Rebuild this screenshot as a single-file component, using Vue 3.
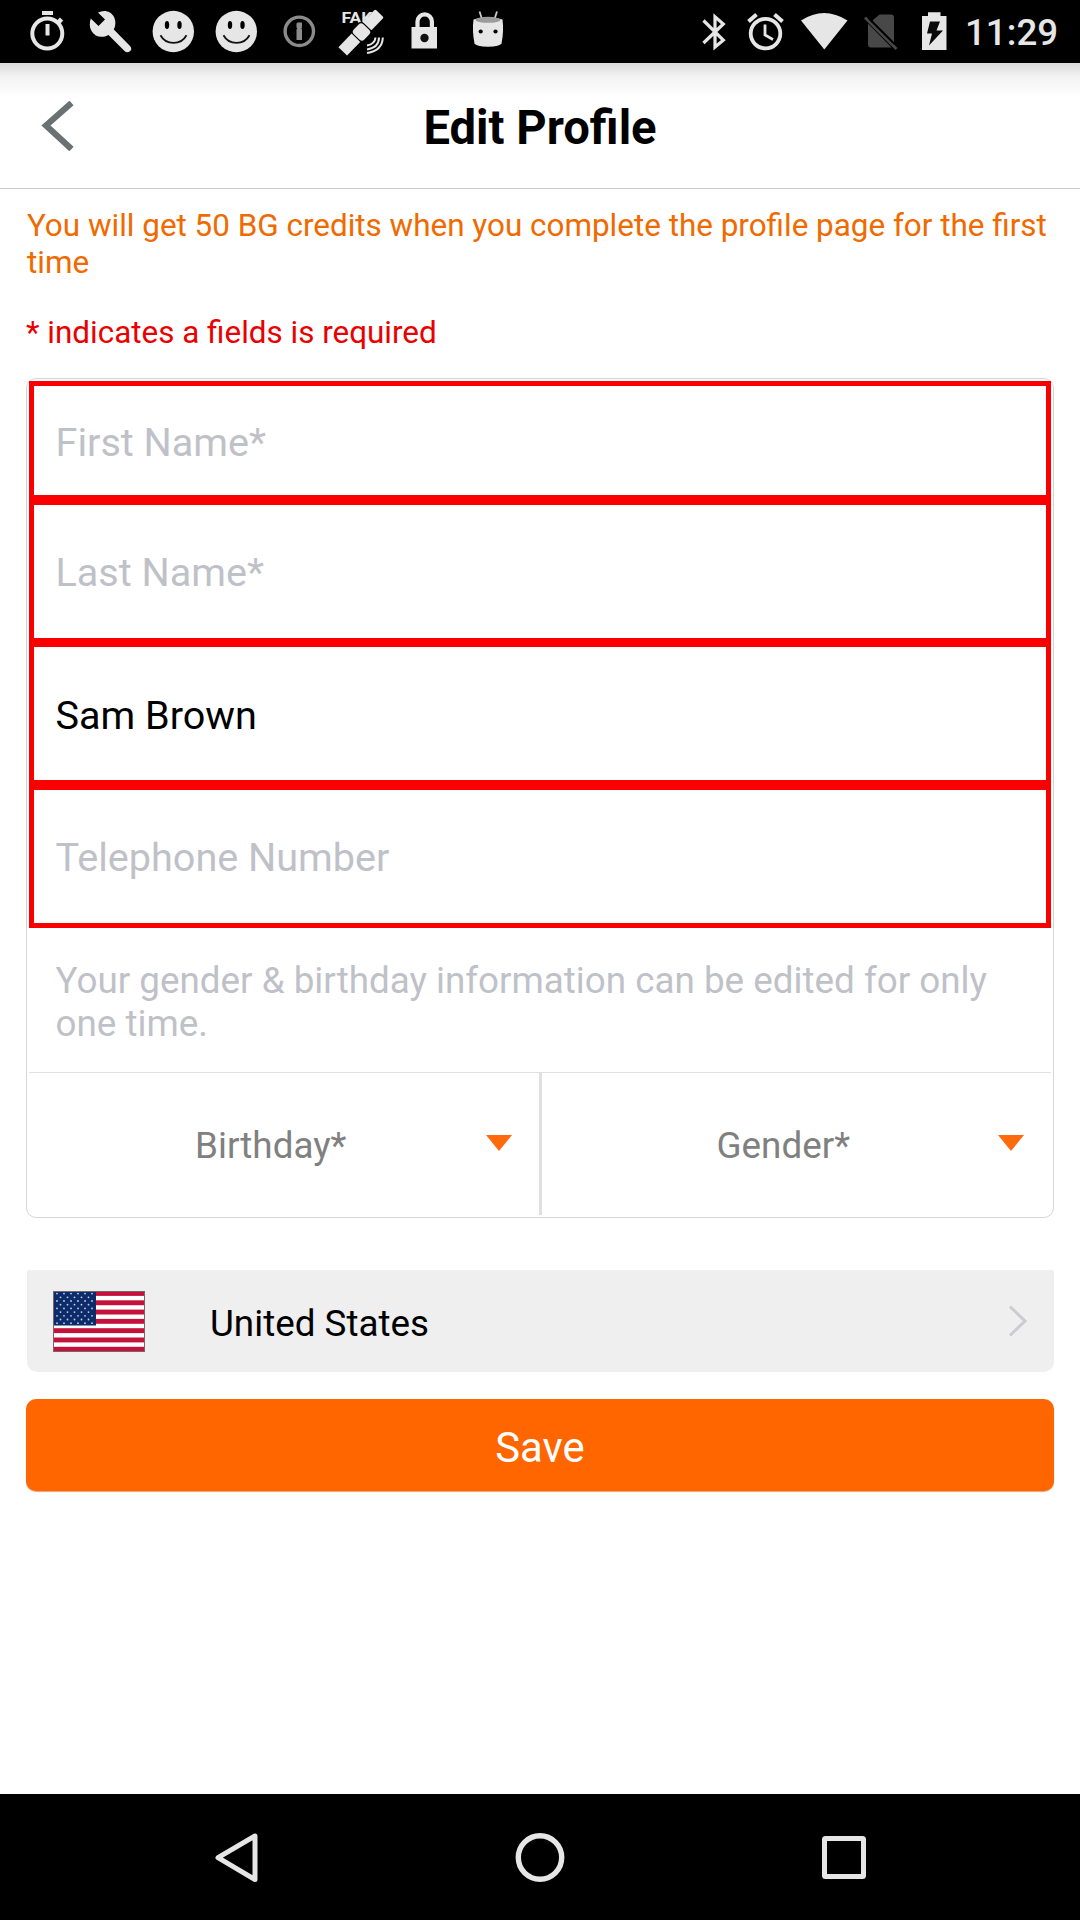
<script setup>
const fields = [
  { text: 'First Name*', size: 'short' },
  { text: 'Last Name*' },
  { text: 'Sam Brown', filled: true, size: 'joined' },
  { text: 'Telephone Number' },
]
const pickers = ['Birthday*', 'Gender*']
const stars = []
for (let r = 0; r < 9; r++) {
  const n = r % 2 ? 5 : 6
  for (let c = 0; c < n; c++) {
    stars.push({ x: 4 + c * 7 + (r % 2 ? 3.5 : 0), y: 2.6 + r * 3.7 })
  }
}
</script>

<template>
  <div class="screen">
    <header class="status">
      <div class="icons">
        <svg width="80" height="63" viewBox="0 0 80 63">
          <path d="M42 11h11v4h-11z" fill="#e6e6e6" />
          <circle cx="47.300" cy="33.500" r="15" fill="none" stroke="#e6e6e6" stroke-width="4" />
          <path d="M47.500 24v11.500" stroke="#e6e6e6" stroke-width="4" />
          <path d="M57.500 23.500l4-4.500" stroke="#e6e6e6" stroke-width="4.500" />
        </svg>
        <svg width="61" height="63" viewBox="80 0 61 63">
          <path fill="#e6e6e6" d="M98 12.500C104 9.500 111 11 114 17C116 21 115.700 26 113.800 29.500L130 46C132 48.500 131.500 50.500 129.500 51.500C128 52.700 126 52.500 124.500 51L108.500 35C102 38.500 95 37 91.500 31C89.200 27 89.500 22.500 90.800 18.500L98.500 26L105 19.500Z" />
        </svg>
        <svg v-for="i in 2" :key="i" width="63" height="63" viewBox="141 0 63 63">
          <circle cx="173.300" cy="31.500" r="20.700" fill="#e6e6e6" />
          <ellipse cx="167" cy="25" rx="2.200" ry="3.900" />
          <ellipse cx="179.500" cy="25" rx="2.200" ry="3.900" />
          <path d="M160.500 35.300C166 45.500 181 45.500 186.500 35.300" fill="none" stroke="#111" stroke-width="1.800" />
        </svg>
        <svg width="64" height="63" viewBox="267 0 64 63">
          <circle cx="299.300" cy="31.300" r="14.200" fill="none" stroke="#8b8b8b" stroke-width="3.400" />
          <path d="M297.500 22.500h4.500v5l-.7 1 .7 1v10.500h-5.500v-10.500l.8-1-.8-1v-4z" fill="#8b8b8b" />
        </svg>
        <svg width="67" height="63" viewBox="331 0 67 63">
          <text x="341.500" y="23" class="fake" textLength="31" lengthAdjust="spacingAndGlyphs">FAK</text>
          <g transform="translate(361.500 32) rotate(-46)" fill="#e6e6e6">
            <rect x="-7.500" y="-8" width="15" height="16" rx="4" stroke="#000" stroke-width="1.300" />
            <rect x="8" y="-6" width="18" height="12" rx="1.500" />
            <rect x="-27" y="-6" width="19" height="12" />
          </g>
          <path d="M367 45.500Q375 44 375.500 37.500M367 49.500Q379 47.500 379 37.500M367 53Q382.500 50.500 382.800 37.500" fill="none" stroke="#e6e6e6" stroke-width="2" />
        </svg>
        <svg width="60" height="63" viewBox="398 0 60 63">
          <path d="M417.500 28v-6.500a7.200 7.200 0 0 1 14.400 0v6.500" fill="none" stroke="#e6e6e6" stroke-width="4.200" />
          <path fill="#e6e6e6" d="M411.500 27h25.500v21.500h-25.500z" />
          <circle cx="424.500" cy="38" r="4.200" fill="#111" />
        </svg>
        <svg width="62" height="63" viewBox="458 0 62 63">
          <path d="M479.500 11.500l2.500 7.500M497 11.500l-2.500 7.500" stroke="#ccc" stroke-width="1.800" />
          <path fill="#e6e6e6" d="M473.500 19.500Q488 15 502.500 19.500Q504 31 501.500 43.500Q500 46.500 488 46.800Q476 46.500 474.500 43.500Q472 31 473.500 19.500Z" />
          <ellipse cx="488" cy="19.800" rx="12.500" ry="3" fill="#9b9b9b" />
          <circle cx="480.700" cy="31.500" r="2.100" />
          <circle cx="495.500" cy="31.500" r="2.100" />
        </svg>
      </div>
      <div class="icons">
        <svg width="44" height="63" viewBox="692 0 44 63">
          <path d="M703.500 20.500L723.300 40.200L715 47V16.800L723.300 24L703.500 43" fill="none" stroke="#e6e6e6" stroke-width="3.200" />
        </svg>
        <svg width="60" height="63" viewBox="736 0 60 63">
          <circle cx="765.500" cy="33.600" r="14.800" fill="none" stroke="#e6e6e6" stroke-width="3.800" />
          <path d="M765 24.500v10.500l8 4.500" fill="none" stroke="#e6e6e6" stroke-width="2.800" />
          <path d="M748.500 21.500l8-7M782.500 21.500l-8-7" stroke="#e6e6e6" stroke-width="4" />
        </svg>
        <svg width="62" height="63" viewBox="796 0 62 63">
          <path d="M801 20.500Q824 5.500 847.500 20.500L824.300 49.500Z" fill="#e6e6e6" />
        </svg>
        <svg width="50" height="63" viewBox="858 0 50 63">
          <path fill="#484848" d="M879.500 14.500H891Q894 14.500 894 17.500V45L873 23.500V20ZM868 23.500L891.500 47.500H871Q868 47.500 868 44.500Z" />
          <path d="M865 17.500L896.500 49" stroke="#484848" stroke-width="2.800" />
          <path d="M868.500 18L894.500 44" stroke="#000" stroke-width="2" />
        </svg>
        <svg width="57" height="63" viewBox="908 0 57 63">
          <path fill="#e6e6e6" d="M922 16h6v-3.700h12.500v3.700h6v34h-24.500z" />
          <path fill="#080808" d="M930 21.500h10l-3.500 9h6.500l-14 15 3-12h-5z" />
        </svg>
        <span class="clock">11:29</span>
      </div>
    </header>

    <div class="bar">
      <svg class="back" width="34" height="50" viewBox="0 0 34 50">
        <path d="M30.500 2L5 24.500L30.500 48" fill="none" stroke="#6a7173" stroke-width="6.200" />
      </svg>
      <h1>Edit Profile</h1>
    </div>

    <main>
      <p class="promo">You will get 50 BG credits when you complete the profile page for the first time</p>
      <p class="required">* indicates a fields is required</p>

      <section class="form">
        <div v-for="f in fields" :key="f.text" class="field" :class="[f.size, { filled: f.filled }]">{{ f.text }}</div>
        <p class="note">Your gender &amp; birthday information can be edited for only one time.</p>
        <div class="pickers">
          <div v-for="p in pickers" :key="p" class="picker">
            <span>{{ p }}</span>
            <svg width="26" height="16" viewBox="0 0 26 16"><path d="M0 0H26L13 16Z" fill="#ff6a0c" /></svg>
          </div>
        </div>
      </section>

      <div class="country">
        <svg class="flag" width="92" height="61" viewBox="0 0 92 61">
          <rect width="92" height="61" fill="#fff" />
          <rect v-for="i in 7" :key="i" x="0" :y="(i - 1) * 9.300" width="92" height="4.900" fill="#c4123a" />
          <rect width="43" height="34.500" fill="#0c2b6b" />
          <circle v-for="(s, i) in stars" :key="'s' + i" :cx="s.x" :cy="s.y" r="0.900" fill="#c8d0e4" />
          <rect x=".5" y=".5" width="91" height="60" fill="none" stroke="#77666c" />
        </svg>
        <span>United States</span>
        <svg class="chev" width="20" height="32" viewBox="0 0 20 32">
          <path d="M2 1.500L17 16L2 30.500" fill="none" stroke="#cbcbd0" stroke-width="3" />
        </svg>
      </div>
      <div class="save">Save</div>
    </main>

    <nav>
      <svg width="60" height="60" viewBox="206 1828 60 60">
        <path d="M255 1836V1879.500L218 1857.700Z" fill="none" stroke="#e6e6e6" stroke-width="5" stroke-linejoin="round" />
      </svg>
      <svg width="60" height="60" viewBox="0 0 60 60">
        <circle cx="30" cy="29.500" r="21.700" fill="none" stroke="#e6e6e6" stroke-width="5.400" />
      </svg>
      <svg width="60" height="60" viewBox="0 0 60 60">
        <rect x="10.500" y="10.500" width="39" height="38" rx="1" fill="none" stroke="#e6e6e6" stroke-width="5" stroke-linejoin="round" />
      </svg>
    </nav>
  </div>
</template>

<style>
body { margin: 0; background: #fff; }
</style>

<style scoped>
* { box-sizing: border-box; }
.screen {
  width: 1080px;
  height: 1920px;
  display: flex;
  flex-direction: column;
  background: #fff;
  font-family: Roboto, "Liberation Sans", sans-serif;
  overflow: hidden;
}
svg { display: block; flex: none; }
.status {
  height: 63px;
  background: #000;
  display: flex;
  justify-content: space-between;
}
.icons { display: flex; }
.icons:last-child { width: 388px; }
.clock {
  font-size: 36.7px;
  font-weight: 500;
  line-height: 66px;
  color: #e6e6e6;
}
.fake {
  font-size: 14.5px;
  font-weight: 700;
  fill: #e6e6e6;
}
.bar {
  height: 126px;
  border-bottom: 1px solid #ccc;
  background: linear-gradient(#dadada, #f3f3f3 14px, #fff 34px);
  display: flex;
  align-items: center;
}
.back { margin-left: 41px; }
h1 {
  flex: 1;
  margin: 5px 75px 0 0;
  text-align: center;
  font-size: 47.2px;
  font-weight: 700;
  line-height: 56px;
  color: #000;
}
main { flex: 1; padding: 19px 26px 0; }
p { margin: 0; }
.promo, .required {
  font-size: 31.43px;
  line-height: 36.6px;
  white-space: nowrap;
}
.promo { color: #f06a00; white-space: normal; padding-left: 1px; }
.required { color: #ea0000; margin-top: 33.800px; height: 37px; }
.form {
  margin-top: 26px;
  height: 840px;
  border: 1px solid #d6d6d6;
  border-radius: 10px;
  padding: 2px;
}
.field {
  height: 143px;
  border: 5px solid #fb0000;
  padding: 3px 0 0 21.5px;
  display: flex;
  align-items: center;
  font-size: 39.6px;
  color: #bfc1c8;
}
.field.short { height: 119px; padding-top: 4px; }
.field.joined { height: 142px; border-top-width: 4px; padding-top: 4px; }
.field.filled { color: #000; }
.note {
  height: 144px;
  padding: 31px 28px 0 26.5px;
  font-size: 36.8px;
  line-height: 43px;
  color: #bfc1c8;
}
.pickers { display: flex; height: 143px; border-top: 1px solid #e0e0e0; }
.picker {
  flex: 1;
  display: flex;
  align-items: center;
  padding: 0 27px;
  font-size: 36.8px;
  color: #808080;
}
.picker + .picker { border-left: 3px solid #e0e0e0; }
.picker span { flex: 1; text-align: center; padding-top: 4px; }
.picker svg { margin-bottom: 1px; }
.country {
  margin: 52px 0 0 1px;
  height: 102px;
  padding: 0 26px;
  border-radius: 2px 2px 10px 10px;
  background: #efefef;
  display: flex;
  align-items: center;
  font-size: 36.8px;
  color: #000;
}
.flag { margin-top: 2px; }
.country span { flex: 1; margin-left: 65px; padding-top: 5px; }
.save {
  margin-top: 27px;
  height: 92px;
  border-radius: 10px;
  background: #ff6600;
  box-shadow: 0 1px 1px #e9a070;
  color: #fff;
  font-size: 41.8px;
  line-height: 98px;
  text-align: center;
}
nav {
  height: 126px;
  padding-top: 2px;
  background: #000;
  display: flex;
  align-items: center;
  justify-content: center;
  gap: 244px;
}
</style>
